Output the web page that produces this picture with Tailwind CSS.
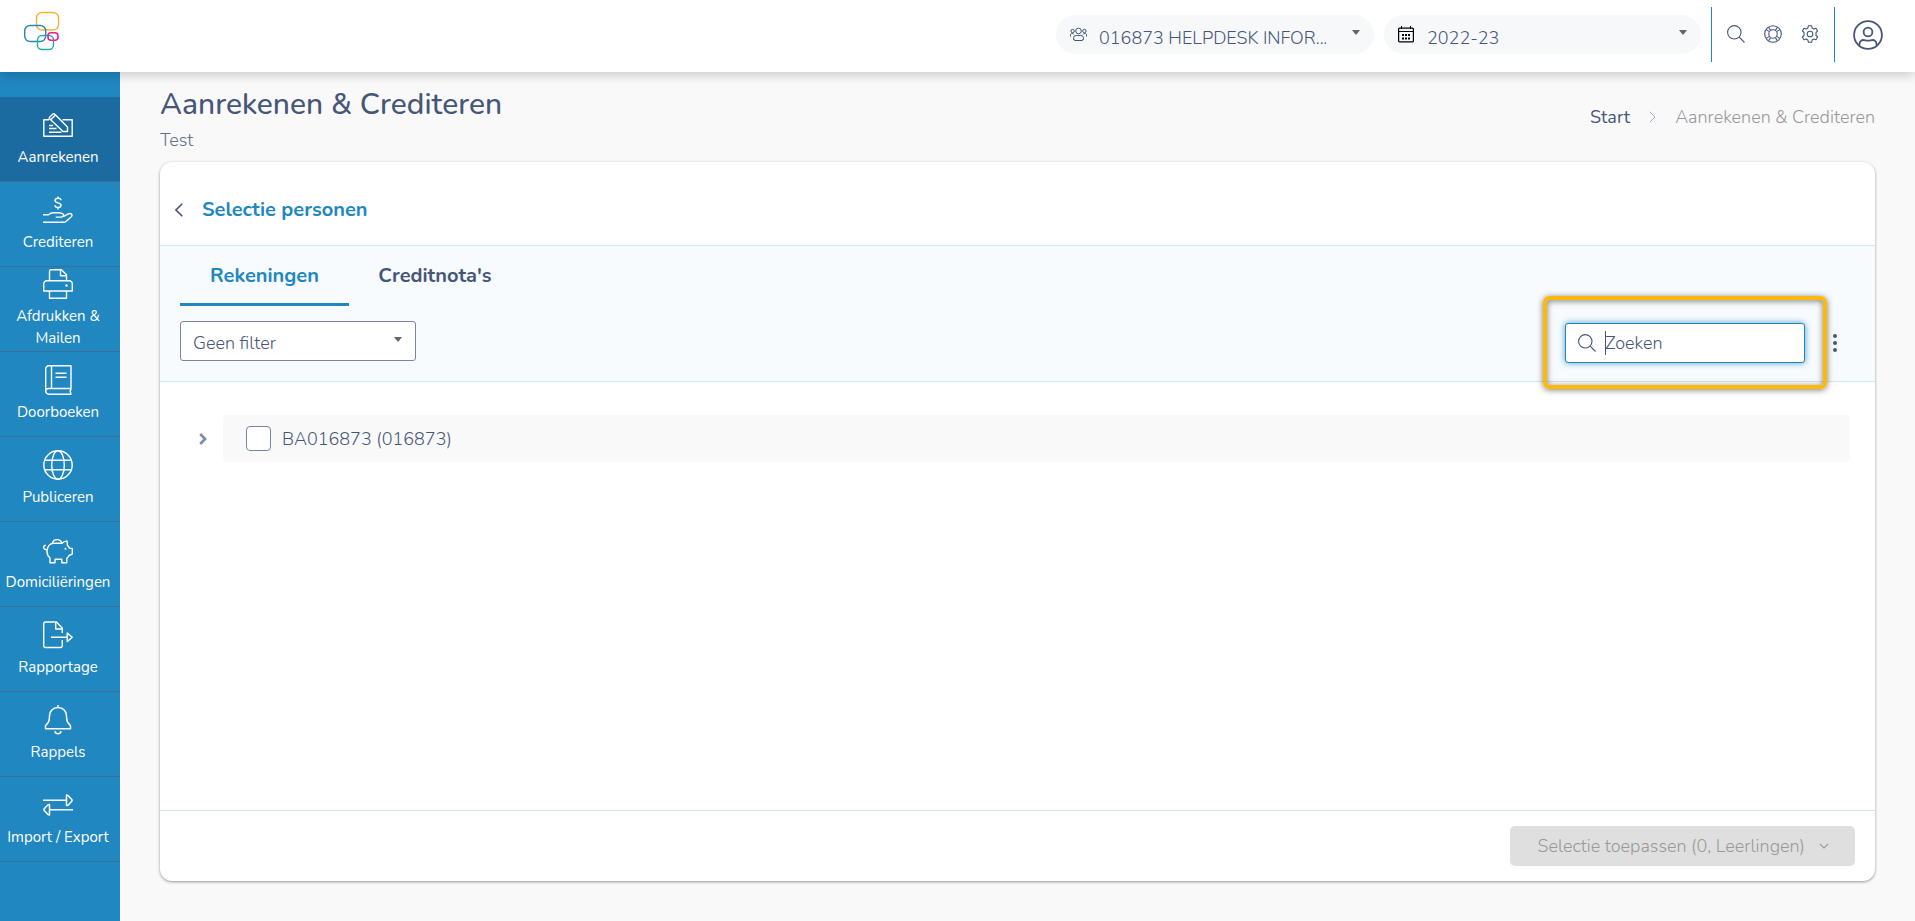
<!DOCTYPE html>
<html lang="nl">
<head>
  <meta charset="UTF-8">
  <meta name="viewport" content="width=device-width, initial-scale=1.0">
  <title>Aanrekenen &amp; Crediteren</title>
  <script src="https://cdn.jsdelivr.net/npm/@tailwindcss/browser@4"></script>
</head>

<body class="bg-[#f9f9f9] min-h-screen flex flex-col font-['Nunito','Roboto',sans-serif] font-light text-lg text-[#465678]">

  <!-- Header -->
  <header class="relative z-10 bg-white h-[72px] shrink-0 flex items-start justify-between shadow-[0_2px_12px_rgba(0,0,0,0.22)]">
    <a href="#" aria-label="Start" class="ml-6 mt-[11px]">
      <svg class="w-9 h-10" viewBox="0 0 36 40" fill="none" stroke-width="1.4">
        <rect x="12.5" y="1.5" width="22" height="17.5" rx="5.5" stroke="#f9b233" />
        <rect x="0.7" y="14.5" width="21" height="16" rx="5.5" stroke="#2187c0" />
        <rect x="13.5" y="24.5" width="16" height="14" rx="4.5" stroke="#22b09b" />
        <rect x="24" y="21.7" width="10" height="7.6" rx="3" stroke="#ec1d8f" stroke-width="1.6" />
      </svg>
    </a>

    <div class="flex items-start">
      <div class="relative mt-[15px] mr-2.5">
        <svg class="absolute left-3.5 top-3 w-[17px] h-[15px] pointer-events-none" viewBox="0 0 17 15" fill="none" stroke="currentColor">
          <circle cx="8.5" cy="4" r="2.8" />
          <circle cx="2.6" cy="4" r="1.7" />
          <circle cx="14.4" cy="4" r="1.7" />
          <path d="M3.500 12.500v-1.300a2.700 2.700 0 0 1 2.700-2.700h4.600a2.700 2.700 0 0 1 2.700 2.700v1.300h-1v1h-8v-1zM.5 9.500V9A1.800 1.800 0 0 1 3.900 7.500M16.500 9.500V9a1.800 1.800 0 0 0-3.400-1.500" />
        </svg>
        <select aria-label="School" class="appearance-none w-[318px] h-[39px] rounded-full bg-[#f6f8fa] pl-[43px] pr-12 pt-1.5">
          <option>016873 HELPDESK INFOR...</option>
        </select>
        <svg class="absolute right-3.5 top-[15px] w-2 h-[5px] pointer-events-none" viewBox="0 0 8 5" fill="#666"><path d="M0 0h8L4.500 4.500h-1z" /></svg>
      </div>

      <div class="relative mt-[15px] mr-2.5">
        <svg class="absolute left-3.5 top-2.5 w-4 h-[18px] pointer-events-none text-black" viewBox="0 0 16 18" fill="none" stroke="currentColor">
          <path d="M3.500 1v3M12.500 1v3" />
          <rect x=".6" y="3.100" width="14.800" height="13.800" rx="1" stroke-width="1.200" />
          <path d="M1 6.500h14" />
          <path d="M4 10h2M7 10h2M10 10h2M4 13.500h2M7 13.500h2M10 13.500h2" stroke-width="2" />
        </svg>
        <select aria-label="Schooljaar" class="appearance-none w-[317px] h-[39px] rounded-full bg-[#f6f8fa] pl-[43px] pr-12 pt-1.5">
          <option>2022-23</option>
        </select>
        <svg class="absolute right-3.5 top-[15px] w-2 h-[5px] pointer-events-none" viewBox="0 0 8 5" fill="#666"><path d="M0 0h8L4.500 4.500h-1z" /></svg>
      </div>

      <div class="mt-[7px] h-[55px] border-x border-[#2187c0] flex items-start gap-[19px] px-[15px] pt-[18px]">
        <button aria-label="Zoeken" class="w-[18px] h-[18px]">
          <svg class="w-[18px] h-[18px]" viewBox="0 0 18 18" fill="none" stroke="currentColor" stroke-width="1.100">
            <circle cx="7.300" cy="7.300" r="6.700" />
            <path d="M12.200 12.200l5.300 5.300" />
          </svg>
        </button>
        <button aria-label="Help" class="w-[18px] h-[18px]">
          <svg class="w-[18px] h-[18px]" viewBox="0 0 18 18" fill="none" stroke="currentColor" stroke-width="1.100">
            <circle cx="9" cy="9" r="8.300" />
            <circle cx="9" cy="9" r="4.200" />
            <path d="M2.200 4.600l3.200 2M4.600 2.200l2 3.200M15.800 4.600l-3.200 2M13.400 2.200l-2 3.200M2.200 13.400l3.200-2M4.600 15.800l2-3.200M15.800 13.400l-3.200-2M13.400 15.800l-2-3.200" />
          </svg>
        </button>
        <button aria-label="Instellingen" class="w-[18px] h-[18px]">
          <svg class="w-[18px] h-[18px]" viewBox="0 0 18 18" fill="none" stroke="currentColor" stroke-width="1.100" stroke-linejoin="round">
            <circle cx="9" cy="9" r="2.800" />
            <path d="M7.400.7h3.200l.5 2.200 1.800 1 2.100-.7L16.600 6 15 7.500v3l1.600 1.500-1.600 2.800-2.100-.7-1.800 1-.5 2.200H7.400l-.5-2.200-1.800-1-2.100.7L1.400 12 3 10.500v-3L1.400 6 3 3.200l2.100.7 1.800-1z" />
          </svg>
        </button>
      </div>

      <button aria-label="Profiel" class="mt-5 ml-[18px] mr-8 w-[30px] h-[30px]">
        <svg class="w-[30px] h-[30px]" viewBox="0 0 30 30" fill="none" stroke="currentColor" stroke-width="1.800">
          <circle cx="15" cy="15" r="13.900" />
          <circle cx="15" cy="12" r="4.400" />
          <path d="M6.500 25.500v-1.500a4 4 0 0 1 4-4c1.500 0 2.500.7 4.500.7s3-.7 4.500-.7a4 4 0 0 1 4 4v1.500" />
        </svg>
      </button>
    </div>
  </header>

  <div class="flex flex-1">

    <!-- Sidebar -->
    <nav class="w-[120px] shrink-0 bg-[#2187c0] pt-[25px] text-white text-[15px] leading-[22px] font-normal text-center">
      <a href="#" class="h-[85px] pr-1 flex flex-col items-center justify-center gap-[6px] bg-[#1b6ba0] border-b border-[#3a6f9b]">
        <svg class="w-[30px] h-[30px]" viewBox="0 0 30 30" fill="none" stroke="currentColor" stroke-width="1.400" stroke-linejoin="round">
          <path d="M6 9.700H.8v16.600h28.400V9.700H19.500" />
          <path d="M6.600 7.200l3-3c.7-.7 1.600-.7 2.200 0L24.500 17v4.500H20L6.600 8.800c-.5-.5-.5-1.100 0-1.600zM7.800 9.700l4.400-4.400" />
          <path d="M6 15.500h4M6 18.500h7.500M6 22.300h12.500" />
        </svg>
        <span>Aanrekenen</span>
      </a>
      <a href="#" class="h-[85px] pr-1 flex flex-col items-center justify-center gap-[6px] border-b border-[#3a6f9b]">
        <svg class="w-[30px] h-[30px]" viewBox="0 0 30 30" fill="none" stroke="currentColor" stroke-width="1.400" stroke-linejoin="round">
          <path d="M18 5.300c0-1.300-1.200-2-3-2s-3 .8-3 2.200c0 3 6 1.800 6 4.800 0 1.500-1.200 2.200-3 2.200s-3-.8-3-2.200M15 1.500v1.800M15 12.500v2" />
          <path d="M0 19.700h5.500c1.500-1.300 3-1.900 4.800-1.900h6.200c2.300 0 2.300 1.300 4 1.300.3 2-.8 3-2.600 3h-5.200M20.200 21.600l5.200-2.800c1.200-.6 2.300-.4 3 .3.900.9.800 2-.3 2.900l-5.200 4.500c-.7.600-1 .7-2 .7H0" />
        </svg>
        <span>Crediteren</span>
      </a>
      <a href="#" class="h-[85px] pr-1 flex flex-col items-center justify-center gap-[6px] border-b border-[#3a6f9b]">
        <svg class="w-[30px] h-[30px] shrink-0" viewBox="0 0 30 30" fill="none" stroke="currentColor" stroke-width="1.400" stroke-linejoin="round">
          <path d="M6.500 12V2.200A1.500 1.500 0 0 1 8 .7h10.500l5 5V12M17.500.7v6h6" />
          <path d="M6.500 22H.7v-7.200a3 3 0 0 1 3-3h22.600a3 3 0 0 1 3 3V22h-5.800M6.500 22h17v7.300h-17z" />
          <circle cx="23.500" cy="16.500" r="1.200" fill="currentColor" stroke="none" />
        </svg>
        <span>Afdrukken &amp;<br>Mailen</span>
      </a>
      <a href="#" class="h-[85px] pr-1 flex flex-col items-center justify-center gap-[6px] border-b border-[#3a6f9b]">
        <svg class="w-[30px] h-[30px]" viewBox="0 0 30 30" fill="none" stroke="currentColor" stroke-width="1.400" stroke-linejoin="round">
          <path d="M5 23.500h23V.7H6A3.200 3.200 0 0 0 2.700 4v22A3.200 3.200 0 0 0 6 29.300h22l-.8-2.900.8-2.900M2.700 26A2.600 2.600 0 0 1 5.300 23.500M8.500.7v22.800M12.500 8.300h11M12.500 12.300h11" />
        </svg>
        <span>Doorboeken</span>
      </a>
      <a href="#" class="h-[85px] pr-1 flex flex-col items-center justify-center gap-[6px] border-b border-[#3a6f9b]">
        <svg class="w-[30px] h-[30px]" viewBox="0 0 30 30" fill="none" stroke="currentColor" stroke-width="1.400">
          <circle cx="15" cy="15" r="14.200" />
          <ellipse cx="15" cy="15" rx="6.300" ry="14.200" />
          <path d="M2 10.200h26M2 19.800h26" />
        </svg>
        <span>Publiceren</span>
      </a>
      <a href="#" class="h-[85px] pr-1 flex flex-col items-center justify-center gap-[6px] border-b border-[#3a6f9b]">
        <svg class="w-[30px] h-[30px]" viewBox="0 0 30 30" fill="none" stroke="currentColor" stroke-width="1.400" stroke-linejoin="round">
          <path d="M10.500 8.200h8.700c.8-1.200 2.300-2 4.800-2.300l.4 4.300c1.100 1 1.800 2 2.200 3.200h2.700v5.700l-3.200 1.400c-.7 1.300-1.300 2-2.300 2.800v4.500h-5v-3.500H12v3.500H7v-4.700c-2-1.800-3-3.900-3-6.600 0-4.600 2.700-8.300 6.500-8.300z" />
          <path d="M9.300 8.200a5 5 0 0 1 9.600 0M4 14.700c-2 .2-3.300-.8-3.300-2.300 0-1.300.9-2.200 2-2.200" />
          <circle cx="22.500" cy="13.700" r="1" fill="currentColor" stroke="none" />
        </svg>
        <span>Domiciliëringen</span>
      </a>
      <a href="#" class="h-[85px] pr-1 flex flex-col items-center justify-center gap-[6px] border-b border-[#3a6f9b]">
        <svg class="w-[30px] h-[30px]" viewBox="0 0 30 30" fill="none" stroke="currentColor" stroke-width="1.400" stroke-linejoin="round">
          <path d="M19.300 13V8.300L13.500 2H2.500A1.800 1.800 0 0 0 .7 3.800v21.900a1.800 1.800 0 0 0 1.800 1.800h15a1.800 1.800 0 0 0 1.800-1.800V20M12.700 2v7h6.600" />
          <path d="M8 17.300h16M24.200 13v8.600l5-4.300z" />
        </svg>
        <span>Rapportage</span>
      </a>
      <a href="#" class="h-[85px] pr-1 flex flex-col items-center justify-center gap-[6px] border-b border-[#3a6f9b]">
        <svg class="w-[30px] h-[30px]" viewBox="0 0 30 30" fill="none" stroke="currentColor" stroke-width="1.500" stroke-linejoin="round">
          <path d="M15 2.500c5 0 8.500 3.500 8.500 8.500 0 5.500 1.200 7 4 9.700v3H2.500v-3c2.800-2.700 4-4.200 4-9.700 0-5 3.500-8.500 8.500-8.500zM15 0v2.500" />
          <path d="M11.800 26.200a3.300 3.300 0 0 0 6.400 0" />
        </svg>
        <span>Rappels</span>
      </a>
      <a href="#" class="h-[85px] pr-1 flex flex-col items-center justify-center gap-[6px] border-b border-[#3a6f9b]">
        <svg class="w-[30px] h-[30px]" viewBox="0 0 30 30" fill="none" stroke="currentColor" stroke-width="1.500" stroke-linejoin="round">
          <path d="M0 10.300h23M23.500 5v10.600l1.500-.4 4-4.300v-1.200l-4-4.300z" />
          <path d="M30 19.700H7M6.500 14.400V25L5 24.600 1 20.300v-1.200l4-4.300z" />
        </svg>
        <span>Import / Export</span>
      </a>
    </nav>

    <!-- Content -->
    <main class="flex-1 min-w-0 flex flex-col px-10 pb-10">
      <div class="h-[90px] flex justify-between">
        <div class="pt-[13px]">
          <h1 class="text-[30px] leading-10 font-medium">Aanrekenen &amp; Crediteren</h1>
          <p class="leading-[30px] text-[#62718c]">Test</p>
        </div>
        <nav aria-label="Kruimelpad" class="flex items-center">
          <a href="#" class="font-normal">Start</a>
          <svg class="w-[7px] h-3 mx-[19px]" viewBox="0 0 7 12" fill="none" stroke="#a3abba"><path d="M.8.800l5.200 5.200-5.200 5.200" /></svg>
          <span class="text-[#98989b]">Aanrekenen &amp; Crediteren</span>
        </nav>
      </div>

      <div class="flex-1 flex flex-col bg-white rounded-xl shadow-[0_1px_3px_rgba(0,0,0,0.4)]">
        <div class="h-[83px] pt-3 pl-[15px] flex items-center gap-[19px]">
          <button aria-label="Terug" class="w-2 h-[14px]">
            <svg class="w-2 h-[14px]" viewBox="0 0 8 14" fill="none" stroke="currentColor" stroke-width="1.600"><path d="M7.300.7L1 7l6.300 6.300" /></svg>
          </button>
          <h2 class="text-xl font-bold text-[#2187c0]">Selectie personen</h2>
        </div>

        <div class="bg-[#f7fbfe] border-y border-[#d3e7f0] px-5">
          <div class="flex text-xl font-bold leading-7">
            <button class="h-[60px] w-[169px] pb-[13px] pt-4 flex items-center justify-center border-b-3 border-[#2187c0] text-[#2187c0]">Rekeningen</button>
            <button class="h-[60px] w-[172px] pb-[13px] pt-4 flex items-center justify-center border-b-3 border-transparent">Creditnota's</button>
          </div>
          <div class="flex items-start justify-between pt-[15px] pb-[18px]">
            <div class="relative">
              <select aria-label="Filter" class="appearance-none w-[236px] h-10 bg-white border border-[#7886a3] rounded-[3px] pl-3 pr-10 pt-1">
                <option>Geen filter</option>
              </select>
              <svg class="absolute right-3.5 top-4 w-2 h-[5px] pointer-events-none" viewBox="0 0 8 5" fill="#666"><path d="M0 0h8L4.500 4.500h-1z" /></svg>
            </div>
            <div class="relative flex items-center pt-0.5 pr-[18px]">
              <!-- Highlight around the search box -->
              <span class="absolute z-10 -left-[22px] -top-[25px] w-[284px] h-[93px] rounded-md border-4 border-[#fdb90b] shadow-[0_1px_6px_rgba(0,0,0,0.5),inset_0_1px_6px_rgba(0,0,0,0.5)] pointer-events-none"></span>
              <svg class="absolute left-[13px] w-[18px] h-[18px] pointer-events-none" viewBox="0 0 18 18" fill="none" stroke="currentColor" stroke-width="1.100">
                <circle cx="7.300" cy="7.300" r="6.700" />
                <path d="M12.200 12.200l5.300 5.300" />
              </svg>
              <span class="absolute left-10 w-px h-6 bg-[#465678]"></span>
              <input type="text" aria-label="Zoeken" placeholder="Zoeken" class="w-60 h-10 bg-white border border-[#2187c0] rounded-[3px] pl-[39px] pr-3 outline-none placeholder:text-[#465678] shadow-[0_0_6px_rgba(33,135,192,0.8)]">
              <button aria-label="Meer" class="ml-7 w-1 h-[18px]">
                <svg class="w-1 h-[18px]" viewBox="0 0 4 18" fill="currentColor">
                  <circle cx="2" cy="2" r="2" /><circle cx="2" cy="9" r="2" /><circle cx="2" cy="16" r="2" />
                </svg>
              </button>
            </div>
          </div>
        </div>

        <div class="flex-1 pt-[33px] pl-[39px] pr-[25px]">
          <div class="flex items-center">
            <button aria-label="Openklappen" class="w-2 h-3 mr-4">
              <svg class="w-2 h-3" viewBox="0 0 8 12" fill="none" stroke="#7d8ba8" stroke-width="2.600"><path d="M1.200 1l4.900 5-4.900 5" /></svg>
            </button>
            <div class="flex-1 h-[47px] flex items-center bg-[#f9f9f9] rounded pl-[23px]">
              <input type="checkbox" id="ba016873" class="appearance-none w-[25px] h-[25px] bg-white border border-[#7886a3] rounded">
              <label for="ba016873" class="pl-[11px]">BA016873 (016873)</label>
            </div>
          </div>
        </div>

        <div class="h-[71px] border-t border-[#cfe6f2] flex items-center justify-end pr-5">
          <button disabled class="h-10 pl-[27px] pr-[26px] flex items-center gap-[14px] rounded-[5px] bg-[#dfdfdf] text-[#999]">
            Selectie toepassen (0, Leerlingen)
            <svg class="w-2.5 h-1.5" viewBox="0 0 10 6" fill="none" stroke="currentColor" stroke-width="1.100"><path d="M.8.800l4.200 4.200L9.200.8" /></svg>
          </button>
        </div>
      </div>
    </main>
  </div>

</body>
</html>
